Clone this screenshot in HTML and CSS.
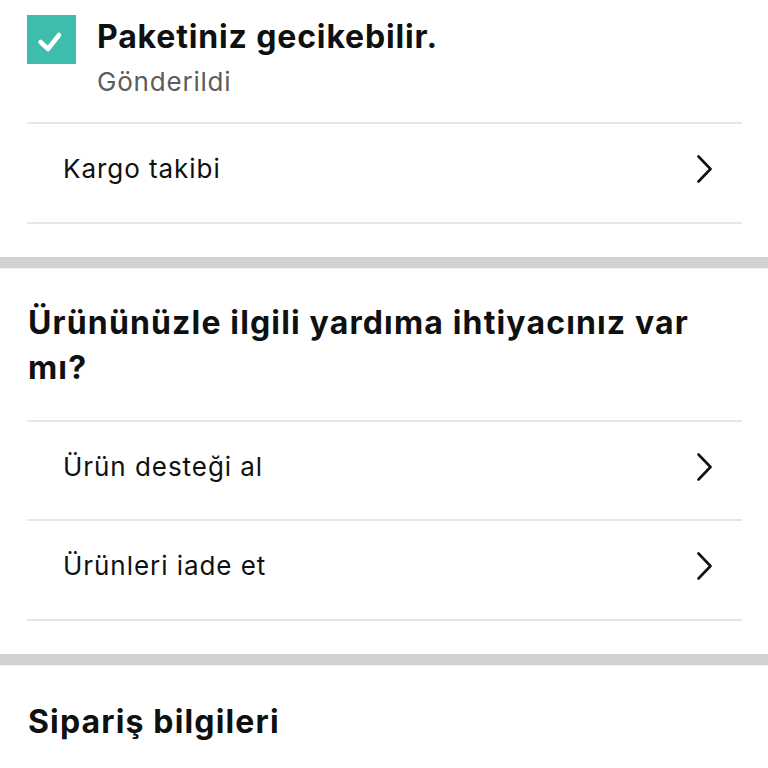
FILE: index.html
```html
<!DOCTYPE html>
<html lang="tr">
<head>
<meta charset="utf-8">
<link rel="stylesheet" href="styles.css">
</head>
<body>
<div class="page">
  <section class="status">
    <div class="status-head">
      <div class="check">
        <svg width="49" height="49" viewBox="0 0 49 49"><path d="M13.5 27 L21 34 L32 20" fill="none" stroke="#fff" stroke-width="4.5" stroke-linecap="round" stroke-linejoin="round"/></svg>
      </div>
      <div class="status-text">
        <div class="title">Paketiniz gecikebilir.</div>
        <div class="subtitle">Gönderildi</div>
      </div>
    </div>
    <a class="row">
      <span class="row-label">Kargo takibi</span>
      <svg class="chev" width="15" height="28" viewBox="0 0 15 28"><path d="M1.5 1.5 L13.5 14 L1.5 26.5" fill="none" stroke="#111" stroke-width="2.6" stroke-linecap="round" stroke-linejoin="round"/></svg>
    </a>
  </section>
  <div class="band"></div>
  <section class="group">
    <h2 class="heading">Ürününüzle ilgili yardıma ihtiyacınız var mı?</h2>
    <a class="row first">
      <span class="row-label">Ürün desteği al</span>
      <svg class="chev" width="15" height="28" viewBox="0 0 15 28"><path d="M1.5 1.5 L13.5 14 L1.5 26.5" fill="none" stroke="#111" stroke-width="2.6" stroke-linecap="round" stroke-linejoin="round"/></svg>
    </a>
    <a class="row">
      <span class="row-label">Ürünleri iade et</span>
      <svg class="chev" width="15" height="28" viewBox="0 0 15 28"><path d="M1.5 1.5 L13.5 14 L1.5 26.5" fill="none" stroke="#111" stroke-width="2.6" stroke-linecap="round" stroke-linejoin="round"/></svg>
    </a>
  </section>
  <div class="band"></div>
  <section class="group info">
    <h2 class="heading">Sipariş bilgileri</h2>
  </section>
</div>
</body>
</html>
```
FILE: styles.css
```css
html, body {
  margin: 0;
  padding: 0;
  background: #fff;
}
body {
  font-family: Inter, "Noto Sans", sans-serif;
  color: #0f1111;
  width: 768px;
  height: 768px;
  overflow: hidden;
}
.page {
  display: flex;
  flex-direction: column;
}
.status {
  padding: 0 26px 0 27px;
}
.status-head {
  display: flex;
  align-items: flex-start;
  gap: 21px;
  padding: 15px 0 20px;
  border-bottom: 2px solid #e6e6e6;
}
.check {
  width: 49px;
  height: 49px;
  background: #3fbdac;
  flex: none;
  display: flex;
}
.status-text {
  padding-top: 2px;
  display: flex;
  flex-direction: column;
  gap: 5px;
}
.title {
  font-size: 32px;
  font-weight: 700;
  line-height: 40px;
  letter-spacing: 0.85px;
}
.subtitle {
  font-size: 26px;
  line-height: 40px;
  color: #5b5d5d;
  letter-spacing: 0.8px;
}
.row {
  display: flex;
  align-items: center;
  justify-content: space-between;
  height: 100px;
  box-sizing: border-box;
  padding: 0 30px 8px 36px;
  border-bottom: 2px solid #e6e6e6;
}
.row-label {
  font-size: 26px;
  line-height: 40px;
  letter-spacing: 0.95px;
}
.chev {
  display: block;
}
.band {
  margin-top: 33px;
  height: 11px;
  background: #d2d2d2;
  border-bottom: 1px solid #f0f0f0;
}
.group {
  padding: 31px 26px 0 27px;
}
.heading {
  margin: 0;
  font-size: 32px;
  font-weight: 700;
  line-height: 45px;
  letter-spacing: 1.15px;
  padding: 0 0 30px 1px;
  border-bottom: 2px solid #e6e6e6;
}
.row.first {
  height: 99px;
}
.info {
  padding-top: 33px;
}
.info .heading {
  border-bottom: none;
}
```
